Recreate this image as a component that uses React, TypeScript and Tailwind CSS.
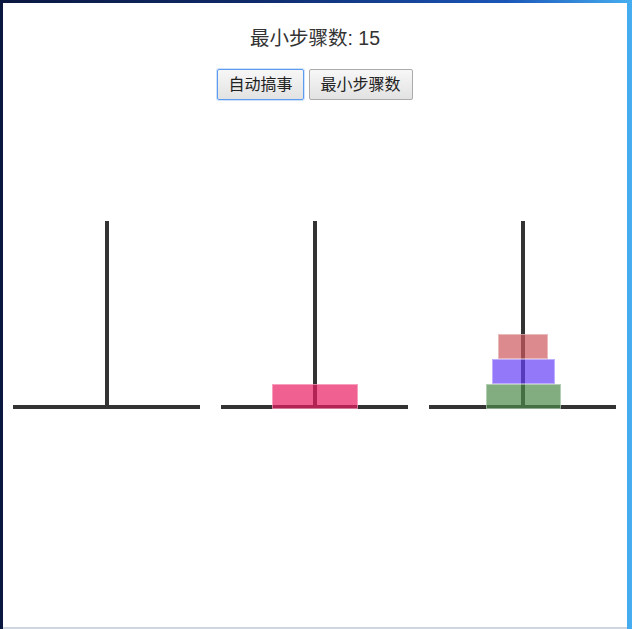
import React from "react";

type Disk = { w: number; color: string };

const towers: Disk[][] = [
  [],
  [{ w: 86, color: "bg-[rgba(233,30,99,0.7)]" }],
  [
    { w: 50, color: "bg-[rgba(205,88,92,0.7)]" },
    { w: 63, color: "bg-[rgba(102,62,248,0.7)]" },
    { w: 75, color: "bg-[rgba(76,138,76,0.7)]" },
  ],
];

export default function App() {
  return (
    <div className="w-[632px] h-[629px] overflow-hidden bg-[linear-gradient(90deg,#0a1840_0%,#0f2a6a_40%,#1a56b8_80%,#46aef0_100%)] pt-[3px] pl-[3px] pr-[5px]">
      <div
        className="h-[626px] bg-white border-b-2 border-[#cfd6e0] flex flex-col items-center"
        style={{ fontFamily: '"Liberation Sans", Arial, "Noto Sans CJK SC", sans-serif' }}
      >
        <div className="mt-[23px] text-[19.5px] leading-[24px] text-[#333]">最小步骤数: 15</div>
        <div className="mt-[19px] flex gap-[5px]">
          <button className="h-[31px] px-[10px] text-[16px] leading-none text-[#222] rounded-[2px] border border-[#5b9bf0] bg-[linear-gradient(#f7f7f7,#e2e2e2)] shadow-[0_0_0_1px_rgba(120,170,240,0.35)]">
            自动搞事
          </button>
          <button className="h-[31px] px-[11px] text-[16px] leading-none text-[#222] rounded-[2px] border border-[#ababab] bg-[linear-gradient(#f7f7f7,#e2e2e2)]">
            最小步骤数
          </button>
        </div>
        <div className="mt-[121px] w-full grid grid-cols-3">
          {towers.map((disks, i) => (
            <div key={i} className="relative mx-[10px] h-[188px] flex flex-col items-center justify-end">
              <div className="absolute left-1/2 -translate-x-1/2 top-0 bottom-[4px] w-[4px] bg-[#333]" />
              <div className="absolute left-0 right-[1px] bottom-0 h-[4px] bg-[#333]" />
              {disks.map((d, j) => (
                <div
                  key={j}
                  className={`relative h-[25px] border border-white/40 ${d.color}`}
                  style={{ width: d.w }}
                />
              ))}
            </div>
          ))}
        </div>
      </div>
    </div>
  );
}
